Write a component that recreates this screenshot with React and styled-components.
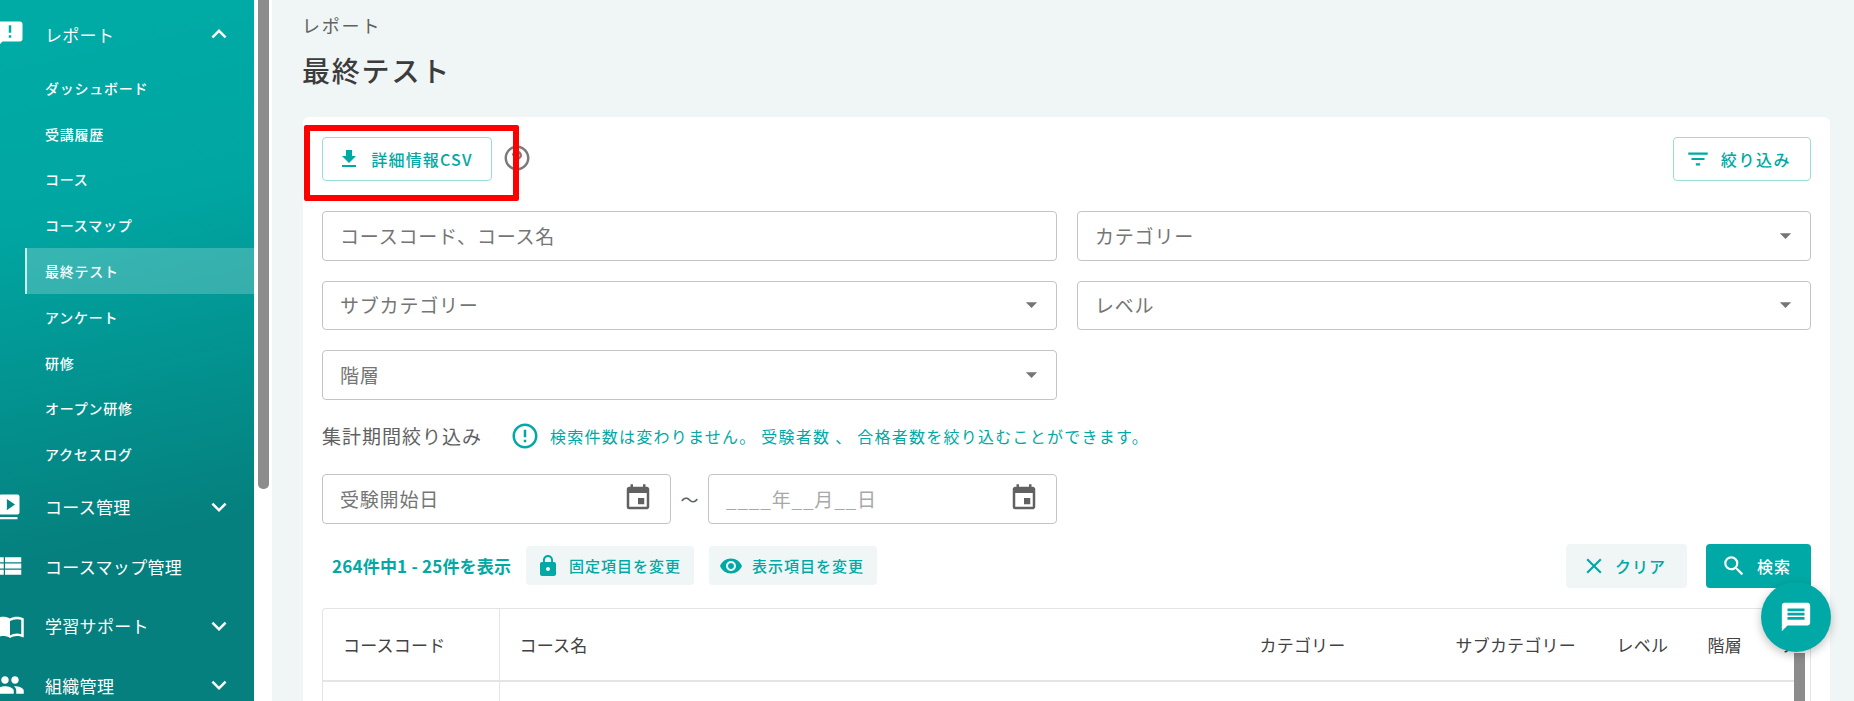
import React from "react";
import styled, { createGlobalStyle } from "styled-components";
import {
  MdAnnouncement, MdExpandLess, MdExpandMore, MdViewList, MdImportContacts, MdPeople,
  MdFileDownload, MdHelpOutline, MdFilterList, MdArrowDropDown, MdErrorOutline, MdEvent,
  MdLock, MdVisibility, MdClose, MdSearch, MdMessage,
} from "react-icons/md";

const teal = "#00a9a5";
const font = `"Noto Sans CJK JP", "Noto Sans", sans-serif`;

const Global = createGlobalStyle`
  html, body { margin: 0; padding: 0; height: 100%; overflow: hidden; background: #f0f5f5; }
  body { font-family: ${font}; }
  * { box-sizing: border-box; }
`;

const Page = styled.div`
  position: relative;
  display: flex;
  width: 1854px;
  height: 701px;
  overflow: hidden;
`;

const Sidebar = styled.nav`
  width: 254px;
  flex: none;
  height: 100%;
  overflow: hidden;
  background: linear-gradient(168deg, #00aba6 0%, #00a6a2 30%, #05807e 75%, #05807e 100%);
  color: #fff;
  padding-top: 9px;
`;

const GroupRow = styled.div`
  display: flex;
  align-items: center;
  height: ${(p) => p.$h || 50}px;
  padding-right: 20px;
`;

const GroupIcon = styled.span`
  width: 45px;
  flex: none;
  display: flex;
  justify-content: flex-end;
  padding-right: 20px;
  font-size: 30px;
  svg { display: block; flex: none; }
`;

const GroupLabel = styled.span`
  flex: 1;
  font-size: 17px;
  letter-spacing: 0.3px;
  font-weight: 400;
  white-space: nowrap;
`;

const Chevron = styled.span`
  display: flex;
  font-size: 30px;
`;

const SubList = styled.div`
  display: flex;
  flex-direction: column;
  padding-left: 25px;
  padding-top: 6px;
`;

const SubItem = styled.div`
  height: 45.8px;
  display: flex;
  align-items: center;
  padding-left: ${(p) => (p.$active ? 18 : 19)}px;
  font-size: 14px;
  letter-spacing: 0.75px;
  font-weight: 500;
  white-space: nowrap;
  border-left: ${(p) => (p.$active ? "2px solid #c8f0ee" : "1px solid transparent")};
  background: ${(p) => (p.$active ? "rgba(255,255,255,0.21)" : "transparent")};
`;

const ScrollGutter = styled.div`
  width: 18px;
  flex: none;
  height: 100%;
  background: #fff;
  padding-left: 4px;
  padding-right: 3px;
`;

const ScrollThumb = styled.div`
  height: 489px;
  background: #8c8c8c;
  border-radius: 0 0 5px 5px;
`;

const Main = styled.main`
  flex: 1;
  min-width: 0;
  height: 100%;
  padding: 0 24px 0 31px;
  display: flex;
  flex-direction: column;
`;

const Crumb = styled.div`
  font-size: 18px;
  letter-spacing: 1.8px;
  color: #616161;
  height: 52px;
  padding-top: 12px;
  line-height: 27px;
  margin-left: -1px;
`;

const Title = styled.h1`
  margin: 0;
  font-size: 28px;
  line-height: 36px;
  height: 65px;
  font-weight: 500;
  letter-spacing: 1.8px;
  color: #3c3c3c;
  margin-left: -1px;
`;

const Card = styled.section`
  flex: 1;
  min-height: 0;
  overflow: hidden;
  background: #fff;
  border-radius: 6px 6px 0 0;
  padding: 20px 19px 0;
`;

const TopBar = styled.div`
  display: flex;
  align-items: center;
  justify-content: space-between;
  margin-bottom: 30px;
`;

const TopLeft = styled.div`
  display: flex;
  align-items: center;
  gap: 10px;
`;

const OutlineButton = styled.button`
  height: 44px;
  width: ${(p) => p.$w}px;
  display: flex;
  align-items: center;
  justify-content: center;
  gap: ${(p) => p.$gap}px;
  background: #fff;
  border: 1px solid #99dddb;
  border-radius: 4px;
  color: ${teal};
  font-family: ${font};
  font-size: 16px;
  letter-spacing: ${(p) => p.$ls}px;
  font-weight: 500;
  padding: 0 ${(p) => p.$pr}px 0 0;
  svg { flex: none; }
`;

const HelpIcon = styled.span`
  display: flex;
  color: #7a7a7a;
  font-size: 30px;
  margin-top: -2px;
`;

const FieldGrid = styled.div`
  display: grid;
  grid-template-columns: 735px 734px;
  column-gap: 20px;
  row-gap: 20px;
`;

const Field = styled.div`
  height: 49.5px;
  border: 1px solid #c4c4c4;
  border-radius: 4px;
  display: flex;
  align-items: center;
  justify-content: space-between;
  padding: 0 11px 1px 17px;
  font-size: 19px;
  letter-spacing: 0.8px;
  color: #757575;
  background: #fff;
  white-space: nowrap;
`;

const Caret = styled.span`
  display: flex;
  font-size: 27px;
  color: #757575;
`;

const PeriodRow = styled.div`
  display: flex;
  align-items: center;
  height: 38px;
  margin-top: 17px;
  margin-bottom: 19px;
`;

const PeriodLabel = styled.span`
  font-size: 19px;
  letter-spacing: 1px;
  color: #616161;
  width: 188px;
`;

const Notice = styled.span`
  display: flex;
  align-items: center;
  gap: 10px;
  color: ${teal};
  font-size: 16px;
  letter-spacing: 1.25px;
  svg { flex: none; }
  white-space: nowrap;
`;

const DateRow = styled.div`
  display: flex;
  align-items: center;
  width: 735px;
`;

const DateField = styled(Field)`
  width: 349px;
  flex: none;
  height: 50px;
  padding-right: 17px;
  color: ${(p) => (p.$mask ? "#a8a8a8" : "#757575")};
`;

const DateIcon = styled.span`
  display: flex;
  font-size: 30px;
  color: #616161;
`;

const Tilde = styled.span`
  width: 37px;
  text-align: center;
  font-size: 18px;
  color: #616161;
`;

const ActionRow = styled.div`
  display: flex;
  align-items: center;
  justify-content: space-between;
  margin-top: 20px;
`;

const ActionLeft = styled.div`
  display: flex;
  align-items: center;
  padding-left: 10px;
`;

const Count = styled.span`
  color: ${teal};
  font-weight: 700;
  font-size: 17px;
  letter-spacing: 0.2px;
  width: 194px;
  white-space: nowrap;
`;

const SoftButton = styled.button`
  height: 39px;
  width: 168px;
  margin-right: 15px;
  display: flex;
  align-items: center;
  justify-content: center;
  gap: 9px;
  background: #f0f5f5;
  border: 0;
  border-radius: 4px;
  color: ${teal};
  font-family: ${font};
  font-size: 15px;
  letter-spacing: 1px;
  font-weight: 500;
  padding: 0 3px 0 0;
`;

const ActionRight = styled.div`
  display: flex;
  gap: 19px;
`;

const ClearButton = styled.button`
  width: 121px;
  height: 44px;
  display: flex;
  align-items: center;
  justify-content: center;
  gap: 8px;
  border: 0;
  border-radius: 4px;
  background: #f0f5f5;
  color: ${teal};
  font-family: ${font};
  font-size: 16px;
  letter-spacing: 1px;
  font-weight: 500;
  padding: 0 6px 0 0;
`;

const SearchButton = styled(ClearButton)`
  width: 105px;
  gap: 10px;
  padding-right: 5px;
  background: ${teal};
  color: #fff;
`;

const TableWrap = styled.div`
  margin-top: 20px;
  width: 1489px;
  height: 120px;
  border: 1px solid #e4e4e4;
  border-bottom: 0;
  border-radius: 4px 4px 0 0;
  overflow: hidden;
  display: flex;
`;

const TableBody = styled.div`
  flex: 1;
  min-width: 0;
`;

const HeadRow = styled.div`
  height: 73px;
  border-bottom: 2px solid #e4e4e4;
  display: grid;
  grid-template-columns: 177px 740px 196px 161px 91px 75px 1fr;
  align-items: center;
  color: #424242;
  font-size: 17px;
  letter-spacing: 0.2px;
  white-space: nowrap;
`;

const HeadCell = styled.div`
  height: 100%;
  display: flex;
  align-items: center;
  padding-left: ${(p) => (p.$first ? 20 : 19.5)}px;
  border-right: ${(p) => (p.$first ? "1px solid #e4e4e4" : "0")};
  overflow: hidden;
`;

const BodyRule = styled.div`
  width: 177px;
  height: 45px;
  border-right: 1px solid #e4e4e4;
`;

const TableScroll = styled.div`
  width: 16px;
  flex: none;
  padding-right: 5px;
  padding-top: 44px;
`;

const TableThumb = styled.div`
  height: 80px;
  background: #8c8c8c;
`;

const Fab = styled.button`
  position: absolute;
  left: 1761px;
  top: 582px;
  width: 70px;
  height: 70px;
  border-radius: 50%;
  border: 0;
  padding: 0;
  background: ${teal};
  color: #fff;
  display: flex;
  align-items: center;
  justify-content: center;
  box-shadow: 0 3px 10px rgba(0,0,0,0.25);
`;

const RedBox = styled.div`
  position: absolute;
  left: 304px;
  top: 125px;
  width: 215px;
  height: 76px;
  border: 6px solid #ff0000;
  border-radius: 2px;
`;

const sub = ["ダッシュボード", "受講履歴", "コース", "コースマップ", "最終テスト", "アンケート", "研修", "オープン研修", "アクセスログ"];

const PlayIcon = () => (
  <svg width="30" height="30" viewBox="0 0 24 24" fill="currentColor">
    <path d="M5 2h13a1.6 1.6 0 0 1 1.6 1.6v12.8A1.6 1.6 0 0 1 18 18H5a1.6 1.6 0 0 1-1.6-1.6V3.600A1.600 1.600 0 0 1 5 2zm4.500 3.500v9l6.500-4.500z" fillRule="evenodd" />
    <rect x="0" y="20" width="18" height="1.800" />
  </svg>
);

export default function App() {
  return (
    <Page>
      <Global />
      <Sidebar>
        <GroupRow>
          <GroupIcon><MdAnnouncement /></GroupIcon>
          <GroupLabel>レポート</GroupLabel>
          <Chevron><MdExpandLess /></Chevron>
        </GroupRow>
        <SubList>
          {sub.map((s) => (
            <SubItem key={s} $active={s === "最終テスト"}>{s}</SubItem>
          ))}
        </SubList>
        <GroupRow $h={59.5}>
          <GroupIcon><PlayIcon /></GroupIcon>
          <GroupLabel>コース管理</GroupLabel>
          <Chevron><MdExpandMore /></Chevron>
        </GroupRow>
        <GroupRow $h={59.5}>
          <GroupIcon><MdViewList /></GroupIcon>
          <GroupLabel>コースマップ管理</GroupLabel>
        </GroupRow>
        <GroupRow $h={59.5}>
          <GroupIcon><MdImportContacts /></GroupIcon>
          <GroupLabel>学習サポート</GroupLabel>
          <Chevron><MdExpandMore /></Chevron>
        </GroupRow>
        <GroupRow $h={59.5}>
          <GroupIcon><MdPeople /></GroupIcon>
          <GroupLabel>組織管理</GroupLabel>
          <Chevron><MdExpandMore /></Chevron>
        </GroupRow>
      </Sidebar>
      <ScrollGutter><ScrollThumb /></ScrollGutter>
      <Main>
        <Crumb>レポート</Crumb>
        <Title>最終テスト</Title>
        <Card>
          <TopBar>
            <TopLeft>
              <OutlineButton $w={170} $gap={10} $ls={1.2} $pr={4}><MdFileDownload size={24} />詳細情報CSV</OutlineButton>
              <HelpIcon><MdHelpOutline /></HelpIcon>
            </TopLeft>
            <OutlineButton $w={138} $gap={10} $ls={1.6} $pr={8}><MdFilterList size={26} />絞り込み</OutlineButton>
          </TopBar>
          <FieldGrid>
            <Field>コースコード、コース名</Field>
            <Field>カテゴリー<Caret><MdArrowDropDown /></Caret></Field>
            <Field>サブカテゴリー<Caret><MdArrowDropDown /></Caret></Field>
            <Field>レベル<Caret><MdArrowDropDown /></Caret></Field>
            <Field>階層<Caret><MdArrowDropDown /></Caret></Field>
          </FieldGrid>
          <PeriodRow>
            <PeriodLabel>集計期間絞り込み</PeriodLabel>
            <Notice><MdErrorOutline size={30} />検索件数は変わりません。 受験者数 、 合格者数を絞り込むことができます。</Notice>
          </PeriodRow>
          <DateRow>
            <DateField>受験開始日<DateIcon><MdEvent /></DateIcon></DateField>
            <Tilde>〜</Tilde>
            <DateField $mask>____年__月__日<DateIcon><MdEvent /></DateIcon></DateField>
          </DateRow>
          <ActionRow>
            <ActionLeft>
              <Count>264件中1 - 25件を表示</Count>
              <SoftButton><MdLock size={24} />固定項目を変更</SoftButton>
              <SoftButton><MdVisibility size={24} />表示項目を変更</SoftButton>
            </ActionLeft>
            <ActionRight>
              <ClearButton><MdClose size={26} />クリア</ClearButton>
              <SearchButton><MdSearch size={26} />検索</SearchButton>
            </ActionRight>
          </ActionRow>
          <TableWrap>
            <TableBody>
              <HeadRow>
                <HeadCell $first>コースコード</HeadCell>
                <HeadCell>コース名</HeadCell>
                <HeadCell>カテゴリー</HeadCell>
                <HeadCell>サブカテゴリー</HeadCell>
                <HeadCell>レベル</HeadCell>
                <HeadCell>階層</HeadCell>
                <HeadCell>ステータス</HeadCell>
              </HeadRow>
              <BodyRule />
            </TableBody>
            <TableScroll><TableThumb /></TableScroll>
          </TableWrap>
        </Card>
      </Main>
      <Fab><MdMessage size={34} /></Fab>
      <RedBox />
    </Page>
  );
}
